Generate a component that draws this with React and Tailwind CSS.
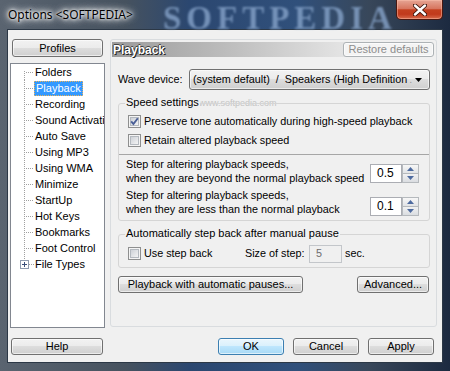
import React from "react";

const ui = "font-['Liberation_Sans',Arial,sans-serif]";

const treeItems = [
  "Folders",
  "Playback",
  "Recording",
  "Sound Activation",
  "Auto Save",
  "Using MP3",
  "Using WMA",
  "Minimize",
  "StartUp",
  "Hot Keys",
  "Bookmarks",
  "Foot Control",
  "File Types",
];

function Btn({ children, className = "", primary, disabled }) {
  const look = primary
    ? "border-[#3c7fb1] bg-[linear-gradient(#eaf6fd_0%,#d9f0fc_50%,#bee6fd_50%,#a7d9f5_100%)]"
    : disabled
    ? "border-[#adb2b5] bg-[#f4f4f4] text-[#8d8d8d]"
    : "border-[#707070] bg-[linear-gradient(#f2f2f2_0%,#ebebeb_50%,#dddddd_50%,#cfcfcf_100%)]";
  return (
    <button
      type="button"
      className={`flex items-center justify-center rounded-[3px] border text-[11px] leading-none shadow-[inset_0_0_0_1px_rgba(255,255,255,0.6)] ${look} ${className}`}
    >
      {children}
    </button>
  );
}

function Check({ checked }) {
  return (
    <svg width="13" height="13" className="shrink-0" shapeRendering="crispEdges">
      <defs>
        <linearGradient id="cbx" x1="0" y1="0" x2="1" y2="1">
          <stop offset="0" stopColor="#cbcfd5" />
          <stop offset="1" stopColor="#f6f6f6" />
        </linearGradient>
      </defs>
      <rect x="0.5" y="0.5" width="12" height="12" fill="#f4f4f4" stroke="#8e8f8f" />
      <rect x="2.5" y="2.5" width="8" height="8" fill="url(#cbx)" stroke="#b4b9bf" />
      {checked && (
        <path
          d="M3.2 6.4 L5.4 9 L9.8 3.2"
          fill="none"
          stroke="#4a5f97"
          strokeWidth="1.9"
          shapeRendering="geometricPrecision"
        />
      )}
    </svg>
  );
}

function Spin({ value }) {
  return (
    <div className="flex h-[19px] w-[49px] shrink-0">
      <div className="flex-1 border border-[#abadb3] bg-white pl-[6px] text-[12px] leading-[17px] text-black">
        {value}
      </div>
      <div className="flex w-[17px] flex-col">
        <div className="flex flex-1 items-center justify-center border border-b-0 border-[#b5b9bd] bg-[linear-gradient(#f7f7f7,#e1e3e6)]">
          <svg width="7" height="4">
            <path d="M0 4 L3.5 0 L7 4 Z" fill="#4d6a9f" />
          </svg>
        </div>
        <div className="flex flex-1 items-center justify-center border border-[#b5b9bd] bg-[linear-gradient(#f1f1f2,#dadde1)]">
          <svg width="7" height="4">
            <path d="M0 0 L7 0 L3.5 4 Z" fill="#4d6a9f" />
          </svg>
        </div>
      </div>
    </div>
  );
}

function Connector({ first, last }) {
  const dot = { stroke: "#a0a0a0", strokeDasharray: "1 1" };
  return (
    <svg width="24" height="16" className="shrink-0" shapeRendering="crispEdges">
      {last ? (
        <>
          <line x1="13.5" y1="0" x2="13.5" y2="4" {...dot} />
          <rect x="9.5" y="4.5" width="8" height="8" fill="#fff" stroke="#8f9cb0" />
          <line x1="11" y1="8.5" x2="16" y2="8.5" stroke="#3a4f7a" />
          <line x1="13.5" y1="6" x2="13.5" y2="11" stroke="#3a4f7a" />
          <line x1="18" y1="8.5" x2="23" y2="8.5" {...dot} />
        </>
      ) : (
        <>
          <line x1="13.5" y1={first ? 7 : 0} x2="13.5" y2="16" {...dot} />
          <line x1="15" y1="8.5" x2="23" y2="8.5" {...dot} />
        </>
      )}
    </svg>
  );
}

function Group({ title, className = "", children }) {
  return (
    <div className={`relative rounded-[3px] border border-[#d5d5d5] ${className}`}>
      <span className="absolute left-[6px] top-[-8px] bg-[#f0f0f0] px-[1px] text-[11px] leading-[13px] text-black">
        {title}
      </span>
      {children}
    </div>
  );
}

export default function App() {
  return (
    <div
      className={`relative h-[371px] w-[450px] overflow-hidden bg-[linear-gradient(90deg,#5a6470_0%,#46525f_28%,#2b4770_42%,#30507b_66%,#38475a_82%,#1c2a40_100%)] ${ui}`}
    >
      {/* title bar */}
      <div className="relative flex h-[29px] items-center pl-[8px]">
        <span className="pointer-events-none absolute left-[163px] top-[-6px] font-['Liberation_Serif',serif] text-[33px] font-bold tracking-[5px] text-[#86a3c9] opacity-80 blur-[1.2px]">
          SOFTPEDIA
        </span>
        <span className="relative font-['Noto_Sans',sans-serif] text-[12px] text-black [text-shadow:0_0_8px_#fff,0_0_8px_#fff,0_0_5px_#fff,0_0_3px_#fff]">
          Options &lt;SOFTPEDIA&gt;
        </span>
        <div className="absolute right-[7px] top-0 flex h-[20px] w-[47px] items-center justify-center rounded-b-[5px] border border-t-0 border-[#4a1810] bg-[linear-gradient(#e6a594_0%,#d7765f_45%,#c4401f_52%,#c13a1c_75%,#d76a4b_100%)] shadow-[inset_0_0_0_1px_rgba(255,200,180,0.45)]">
          <svg width="14" height="12">
            <path d="M2 1.5 L12 10.5 M12 1.5 L2 10.5" stroke="#3a1208" strokeWidth="4.2" strokeLinecap="round" />
            <path d="M2 1.5 L12 10.5 M12 1.5 L2 10.5" stroke="#fff" strokeWidth="2.4" strokeLinecap="round" />
          </svg>
        </div>
      </div>

      {/* client area */}
      <div className="mx-[7px] h-[334px] border border-[#2c3846] bg-[#f0f0f0] pt-[9px] text-black">
        <div className="flex h-[289px] pl-[2px]">
          {/* left column */}
          <div className="flex w-[95px] flex-col">
            <Btn className="mx-[2px] h-[18px]">Profiles</Btn>
            <div className="mt-[6px] h-[265px] overflow-hidden whitespace-nowrap border border-[#828790] bg-white text-[11px]">
              {treeItems.map((item, i) => (
                <div key={item} className="flex h-[16px] items-center">
                  <Connector first={i === 0} last={i === treeItems.length - 1} />
                  {item === "Playback" ? (
                    <span className="-ml-[1px] border border-dotted border-[#e9b25a] bg-[#3399ff] px-[1px] leading-[13px] text-white">
                      {item}
                    </span>
                  ) : (
                    <span className="leading-[16px]">{item}</span>
                  )}
                </div>
              ))}
            </div>
          </div>

          {/* right panel */}
          <div className="relative ml-[5px] flex h-[288px] w-[327px] flex-col rounded-[3px] border border-[#d9dcdf] text-[10.8px]">
            <span className="pointer-events-none absolute left-[88px] top-[57px] text-[9px] text-[#c4c4c4]">
              www.softpedia.com
            </span>

            <div className="mx-[1px] mt-[2px] flex h-[15px] items-center justify-between bg-[linear-gradient(90deg,#9b9b9b_0%,#bcbcbc_35%,#e2e2e2_70%,#f0f0f0_100%)]">
              <span className="pl-[1px] text-[12px] font-bold leading-none text-white [text-shadow:1px_1px_0_#222,-1px_0_0_#444,0_-1px_0_#444]">
                Playback
              </span>
              <Btn disabled className="mr-[1px] h-[15px] w-[91px]">
                Restore defaults
              </Btn>
            </div>

            <div className="flex flex-col pl-[7px] pr-[6px]">
              <div className="mt-[12px] flex h-[21px] items-center justify-between">
                <span>Wave device:</span>
                <div className="relative flex h-[21px] w-[241px] items-center rounded-[3px] border border-[#707070] bg-[linear-gradient(#f2f2f2_0%,#ebebeb_50%,#dddddd_50%,#cfcfcf_100%)] pl-[3px] shadow-[inset_0_0_0_1px_rgba(255,255,255,0.6)]">
                  <span className="whitespace-pre">(system default)  /  Speakers (High Definition</span>
                  <span className="ml-[2px] text-[#9a9a9a]">.</span>
                  <svg width="7" height="4" className="absolute right-[7px] top-[8px]">
                    <path d="M0 0 L7 0 L3.5 4 Z" fill="#000" />
                  </svg>
                </div>
              </div>

              <Group title="Speed settings" className="mt-[13px] h-[118px]">
                <div className="mt-[8px] flex h-[19px] items-center gap-[3px] pl-[9px]">
                  <Check checked />
                  <span>Preserve tone automatically during high-speed playback</span>
                </div>
                <div className="flex h-[19px] items-center gap-[3px] pl-[9px]">
                  <Check />
                  <span>Retain altered playback speed</span>
                </div>
                <div className="mt-[4px] h-px bg-[#a6a6a6]" />
                <div className="mt-[2px] flex justify-between pl-[7px] pr-[10px]">
                  <div className="leading-[14px]">
                    <div>Step for altering playback speeds,</div>
                    <div>when they are beyond the normal playback speed</div>
                  </div>
                  <div className="mb-[2px] self-end">
                    <Spin value="0.5" />
                  </div>
                </div>
                <div className="mt-[3px] flex justify-between pl-[7px] pr-[10px]">
                  <div className="leading-[14px]">
                    <div>Step for altering playback speeds,</div>
                    <div>when they are less than the normal playback</div>
                  </div>
                  <div className="self-end">
                    <Spin value="0.1" />
                  </div>
                </div>
              </Group>

              <Group title="Automatically step back after manual pause" className="mt-[13px] h-[34px]">
                <div className="mt-[9px] flex h-[19px] items-center pl-[9px]">
                  <div className="flex w-[117px] items-center gap-[3px]">
                    <Check />
                    <span>Use step back</span>
                  </div>
                  <span className="w-[64px] overflow-hidden whitespace-nowrap">Size of step:</span>
                  <div className="flex h-[18px] w-[33px] items-center border border-[#c3c6ca] bg-[#f0f0f0] pl-[6px] text-[#6d6d6d]">
                    5
                  </div>
                  <span className="ml-[3px]">sec.</span>
                </div>
              </Group>

              <div className="mt-[8px] flex h-[17px] justify-between pr-[1px]">
                <Btn className="h-[17px] w-[185px]">Playback with automatic pauses...</Btn>
                <Btn className="h-[17px] w-[72px]">Advanced...</Btn>
              </div>
            </div>
          </div>
        </div>

        {/* bottom row */}
        <div className="mt-[10px] flex h-[17px] pl-[3px] pr-[8px]">
          <Btn className="h-[17px] w-[92px]">Help</Btn>
          <div className="ml-auto flex gap-[9px]">
            <Btn primary className="h-[17px] w-[66px]">OK</Btn>
            <Btn className="h-[17px] w-[66px]">Cancel</Btn>
            <Btn className="h-[17px] w-[66px]">Apply</Btn>
          </div>
        </div>
      </div>
    </div>
  );
}
